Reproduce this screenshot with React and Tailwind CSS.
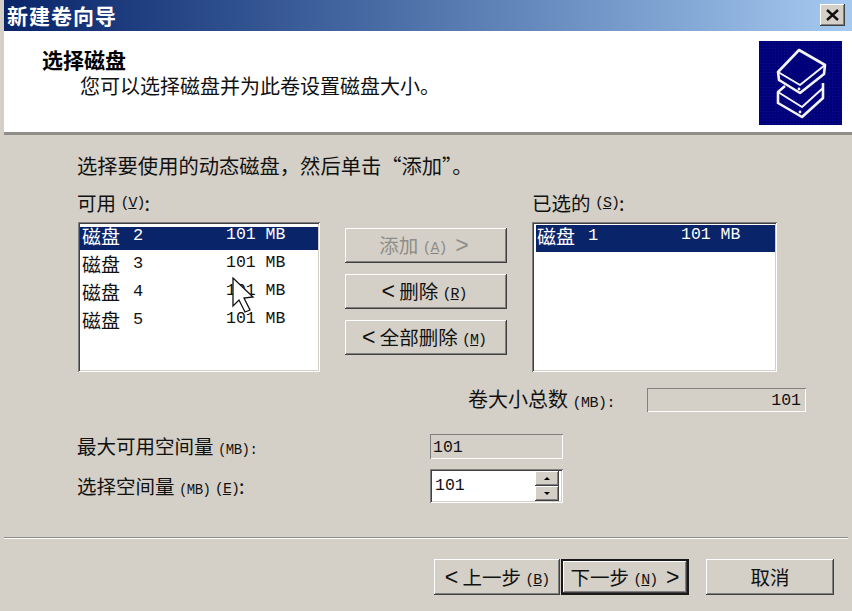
import React from "react";

const raised = "shadow-[inset_-1px_-1px_#404040,inset_1px_1px_#ffffff,inset_-2px_-2px_#808080,inset_2px_2px_#d4d0c8]";
const sunken = "shadow-[inset_1px_1px_#808080,inset_-1px_-1px_#ffffff,inset_2px_2px_#404040,inset_-2px_-2px_#d4d0c8]";
const etched = "shadow-[inset_1px_1px_#808080,inset_-1px_-1px_#ffffff]";

function Key({ k, dim }) {
  return (
    <span className="align-[1px] font-['Liberation_Mono',monospace] text-[15px] font-medium tracking-[-1px]">
      (<u className={dim ? "decoration-[#808080]" : ""}>{k}</u>)
    </span>
  );
}

function Arrow({ children }) {
  return <span className="font-['Liberation_Sans',sans-serif] text-[23px] font-light leading-none">{children}</span>;
}

function DiskRow({ name, selected, right }) {
  return (
    <div className={`flex items-center ${right ? "h-[27px] pb-[6px] pl-[1px]" : "mb-[5px] h-[23px] pb-[6px] pl-[2px]"} ${selected ? "bg-[#0a246a] text-white" : "text-[#111]"}`}>
      <span className="flex w-[144px] shrink-0 items-center">
        磁盘
        <span className="ml-[13px] font-['Liberation_Mono',monospace] text-[17px]">{name}</span>
      </span>
      <span className="font-['Liberation_Mono',monospace] text-[16.5px] whitespace-pre">101 MB</span>
    </div>
  );
}

function WinButton({ className = "", children }) {
  return (
    <div className={`flex items-center justify-center bg-[#d4d0c8] ${raised} ${className}`}>
      <span className="whitespace-pre">{children}</span>
    </div>
  );
}

function DiskIcon() {
  return (
    <div className="mb-[7px] mr-[10px] h-[84px] w-[83px] self-end bg-[#00007a] bg-[radial-gradient(#0e0e90_1px,transparent_1px)] bg-[length:3px_3px]">
      <svg width="83" height="84" viewBox="0 0 83 84" fill="none" stroke="#f4f4f4" strokeWidth="2.6" strokeLinejoin="round">
        <path d="M64 42 L64 57 L43 76 L19 62 L19 51 L26 45" />
        <path d="M19 51 L43 66 L64 47" strokeWidth="2" />
        <path d="M40 9 L66 24 L65 33 L41 52 L20 39 L19 31 Z" fill="#00007a" />
        <path d="M19 31 L41 44 L66 24" strokeWidth="2" />
        <circle cx="40" cy="48" r="1.4" fill="#f4f4f4" stroke="none" />
        <circle cx="41" cy="71" r="1.4" fill="#f4f4f4" stroke="none" />
      </svg>
    </div>
  );
}

export default function App() {
  return (
    <div className="flex h-[611px] w-[852px] flex-col overflow-hidden bg-[#d4d0c8] pl-[4px] font-['Noto_Sans_CJK_SC','Liberation_Sans',sans-serif] text-[19.5px] leading-none text-[#111]">
      {/* title bar */}
      <div className="flex h-[31px] shrink-0 items-center justify-between bg-gradient-to-r from-[#0a246a] to-[#a6caf0] pl-[3px] pr-[7px]">
        <span className="text-[21px] leading-[31px] font-bold tracking-[1px] text-white">新建卷向导</span>
        <div className={`mb-[2px] flex h-[22px] w-[25px] items-center justify-center bg-[#d4d0c8] ${raised}`}>
          <svg width="15" height="12" viewBox="0 0 15 12" stroke="#111" strokeWidth="2.4">
            <path d="M2 1 L13 11 M13 1 L2 11" />
          </svg>
        </div>
      </div>

      {/* header */}
      <div className="flex h-[101px] shrink-0 justify-between bg-white">
        <div className="pl-[38px] pt-[18px]">
          <div className="text-[21px] font-bold text-black">选择磁盘</div>
          <div className="mt-[6px] pl-[38px] text-[20px]">您可以选择磁盘并为此卷设置磁盘大小。</div>
        </div>
        <DiskIcon />
      </div>
      <div className="h-[3px] shrink-0 bg-[#8f8d88]" />

      {/* body */}
      <div className="flex flex-1 flex-col">
        <div className="pl-[73px]">
          <div className="mt-[17px] flex h-[26px] items-center text-[20.3px]">选择要使用的动态磁盘，然后单击“添加”。</div>
          <div className="mt-[12px] flex">
            <div className="w-[243px]">
              <div className="flex h-[26px] items-center whitespace-pre">可用 <Key k="V" />:</div>
              <div className={`relative ml-[1px] mt-[6px] h-[150px] bg-white pt-[5px] ${sunken}`}>
                <div className="mx-[2px] text-[19px]">
                  <DiskRow name="2" selected />
                  <DiskRow name="3" />
                  <DiskRow name="4" />
                  <DiskRow name="5" />
                </div>
                <svg className="absolute left-[153px] top-[55px]" width="24" height="38" viewBox="0 0 24 38" fill="#ffffff" stroke="#111" strokeWidth="1.3">
                  <path d="M2 1 L2 29 L8 23 L14 35 L19 33 L13 21 L22 20 Z" />
                </svg>
              </div>
            </div>

            <div className="ml-[25px] flex w-[162px] flex-col gap-[11px] pt-[38px]">
              <WinButton className="h-[35px] pr-[4px] text-[#8f8d88]">添加 <Key k="A" dim />  <Arrow>&gt;</Arrow></WinButton>
              <WinButton className="h-[35px] pr-[4px]"><Arrow>&lt;</Arrow> 删除 <Key k="R" /></WinButton>
              <WinButton className="h-[35px] pr-[4px]"><Arrow>&lt;</Arrow> 全部删除 <Key k="M" /></WinButton>
            </div>

            <div className="ml-[25px] w-[245px]">
              <div className="flex h-[26px] items-center whitespace-pre">已选的 <Key k="S" />:</div>
              <div className={`mt-[6px] h-[150px] bg-white pt-[3px] ${sunken}`}>
                <div className="ml-[4px] mr-[2px] text-[19px]">
                  <DiskRow name="1" selected right />
                </div>
              </div>
            </div>
          </div>

          <div className="ml-[391px] mt-[16px] flex h-[24px] items-center">
            <span className="w-[179px] whitespace-pre text-[20px]">卷大小总数 <span className="font-['Liberation_Mono',monospace] text-[15px] tracking-[-0.5px]">(MB):</span></span>
            <div className={`flex h-[24px] w-[159px] items-center justify-end pr-[5px] pt-[2px] font-['Liberation_Mono',monospace] text-[16.5px] ${etched}`}>101</div>
          </div>

          <div className="mt-[22px] flex h-[25px] items-center">
            <span className="w-[353px] whitespace-pre">最大可用空间量 <span className="font-['Liberation_Mono',monospace] text-[14px] tracking-[-0.5px]">(MB):</span></span>
            <div className={`flex h-[25px] w-[133px] items-center pl-[3px] pt-[3px] font-['Liberation_Mono',monospace] text-[16.5px] ${etched}`}>101</div>
          </div>

          <div className="mt-[10px] flex h-[34px] items-center">
            <span className="w-[353px] whitespace-pre">选择空间量 <span className="font-['Liberation_Mono',monospace] text-[14px] tracking-[-0.5px]">(MB)</span> <Key k="E" />:</span>
            <div className={`flex h-[34px] w-[133px] items-center justify-between bg-white p-[2px] pl-[5px] font-['Liberation_Mono',monospace] text-[16.5px] ${sunken}`}>
              <span>101</span>
              <div className="mr-[2px] flex flex-col">
                <div className={`flex h-[15px] w-[24px] items-center justify-center bg-[#d4d0c8] ${raised}`}>
                  <div className="h-0 w-0 border-x-[3px] border-b-[3px] border-x-transparent border-b-black" />
                </div>
                <div className={`flex h-[15px] w-[24px] items-center justify-center bg-[#d4d0c8] ${raised}`}>
                  <div className="h-0 w-0 border-x-[3px] border-t-[3px] border-x-transparent border-t-black" />
                </div>
              </div>
            </div>
          </div>
        </div>

        <div className="mr-[4px] mt-[34px] h-[2px] shrink-0 border-b border-white bg-[#8f8d88]" />

        <div className="mt-[20px] flex pl-[430px]">
          <WinButton className="h-[36px] w-[126px]"><Arrow>&lt;</Arrow> 上一步 <Key k="B" /></WinButton>
          <div className="ml-[1px] h-[36px] w-[128px] border-2 border-[#1a1a1a]">
            <WinButton className="h-full w-full">下一步 <Key k="N" />  <Arrow>&gt;</Arrow></WinButton>
          </div>
          <WinButton className="ml-[17px] h-[36px] w-[128px]">取消</WinButton>
        </div>
      </div>
    </div>
  );
}
